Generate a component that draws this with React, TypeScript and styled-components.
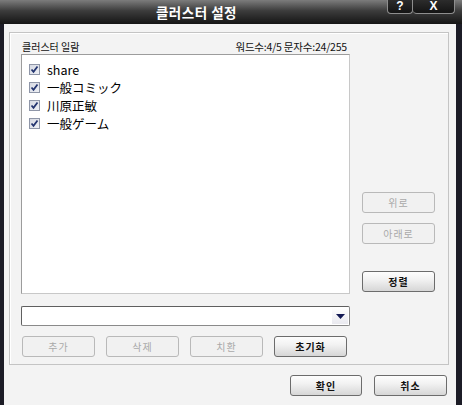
import * as React from 'react';
import styled, { createGlobalStyle } from 'styled-components';

const GlobalStyle = createGlobalStyle`
  html, body {
    margin: 0;
    padding: 0;
    background: #1c1c26;
  }
  body {
    font-family: "Noto Sans CJK KR", "Liberation Sans", sans-serif;
  }
`;

const Window = styled.div`
  width: 462px;
  height: 405px;
  display: flex;
  flex-direction: column;
  background: #1c1c26;
  overflow: hidden;
`;

const TitleBar = styled.div`
  height: 24px;
  display: flex;
  align-items: flex-start;
  background: linear-gradient(#7c7c7c 0%, #3c3c3c 45%, #151515 100%);
`;

const Title = styled.div`
  flex: 1;
  height: 24px;
  line-height: 24px;
  text-align: center;
  padding-left: 6px;
  color: #ffffff;
  font-size: 13.5px;
  font-weight: 700;
  letter-spacing: 0.5px;
`;

const TitleButtons = styled.div`
  display: flex;
  margin-right: 7px;
`;

const TitleButton = styled.div<{ $w: number }>`
  width: ${(p) => p.$w}px;
  height: 14px;
  box-sizing: border-box;
  border: 1px solid #8e8e8e;
  border-top: none;
  border-radius: 0 0 4px 4px;
  background: linear-gradient(#2c2c2c, #141414);
  color: #ffffff;
  font-family: "Liberation Sans", sans-serif;
  font-weight: 700;
  font-size: 12px;
  line-height: 12px;
  text-align: center;
  & + & {
    border-left: none;
  }
`;

const Body = styled.div`
  flex: 1;
  margin: 0 6px 0 4px;
  background: #f3f3f3;
  padding: 8px 7px 0 5px;
  display: flex;
  flex-direction: column;
`;

const GroupBox = styled.div`
  border: 1px solid #c4c4c4;
  box-shadow: inset 1px 1px 0 #ffffff;
  padding: 5px 0 7px 11px;
  display: grid;
  grid-template-columns: 329px 73px;
  column-gap: 12px;
  grid-template-rows: 16px 240px auto auto;
`;

const LabelRow = styled.div`
  display: flex;
  justify-content: space-between;
  align-items: center;
  font-size: 10px;
  color: #111111;
  padding: 0 3px 0 1px;
`;

const Counter = styled.span`
  font-size: 10.5px;
  letter-spacing: -0.2px;
`;

const ListBox = styled.div`
  background: #ffffff;
  border: 1px solid #9c9c9c;
  border-right-color: #c8c8c8;
  border-bottom-color: #c8c8c8;
  padding: 5px 0 0 7px;
  display: flex;
  flex-direction: column;
`;

const Item = styled.label`
  height: 18px;
  display: flex;
  align-items: center;
  gap: 7px;
  font-family: "Noto Sans CJK JP", "Liberation Sans", sans-serif;
  font-size: 12.5px;
  color: #000000;
`;

const CheckBox = styled.span`
  width: 11px;
  height: 11px;
  box-sizing: border-box;
  border: 1px solid #8f96a8;
  background: linear-gradient(135deg, #d6d9e2, #eef0f5);
  display: flex;
  align-items: center;
  justify-content: center;
`;

const SideColumn = styled.div`
  display: flex;
  flex-direction: column;
  justify-content: flex-end;
  padding-bottom: 2px;
`;

const Button = styled.div<{ $enabled?: boolean; $w?: number }>`
  width: ${(p) => p.$w ?? 73}px;
  height: 21px;
  box-sizing: border-box;
  border: 1px solid ${(p) => (p.$enabled ? '#6c6c6c' : '#b9b9b9')};
  border-radius: 3px;
  background: ${(p) =>
    p.$enabled ? 'linear-gradient(#fdfdfd, #f2f2f2 40%, #d6d6d6)' : '#f1f1f1'};
  color: ${(p) => (p.$enabled ? '#111111' : '#a9a9a9')};
  font-size: 10px;
  font-weight: ${(p) => (p.$enabled ? 700 : 400)};
  display: flex;
  align-items: center;
  justify-content: center;
  letter-spacing: 1px;
`;

const SideGap = styled.div<{ $h: number }>`
  height: ${(p) => p.$h}px;
`;

const ComboRow = styled.div`
  grid-column: 1;
  margin-top: 12px;
  height: 20px;
  box-sizing: border-box;
  border: 1px solid #8a8a8a;
  border-top-color: #5f5f5f;
  border-left-color: #5f5f5f;
  border-radius: 2px;
  background: #ffffff;
  display: flex;
  justify-content: flex-end;
  align-items: stretch;
  padding: 1px;
`;

const ComboArrow = styled.div`
  width: 16px;
  background: linear-gradient(#ffffff, #e9e9ef);
  display: flex;
  align-items: center;
  justify-content: center;
`;

const ButtonRow = styled.div`
  grid-column: 1;
  margin-top: 10px;
  display: flex;
  gap: 11px;
  padding-left: 1px;
`;

const Footer = styled.div`
  display: flex;
  justify-content: flex-end;
  gap: 12px;
  padding: 10px 2px 0 0;
`;

function Check() {
  return (
    <svg width="9" height="9" viewBox="0 0 9 9">
      <path d="M1.5 4.5 L3.5 6.8 L7.5 1.5" fill="none" stroke="#23346f" strokeWidth="1.8" />
    </svg>
  );
}

const items = ['share', '一般コミック', '川原正敏', '一般ゲーム'];

export default function App() {
  return (
    <>
      <GlobalStyle />
      <Window>
        <TitleBar>
          <Title>클러스터 설정</Title>
          <TitleButtons>
            <TitleButton $w={26}>?</TitleButton>
            <TitleButton $w={42}>X</TitleButton>
          </TitleButtons>
        </TitleBar>
        <Body>
          <GroupBox>
            <LabelRow>
              <span>클러스터 일람</span>
              <Counter>워드수:4/5 문자수:24/255</Counter>
            </LabelRow>
            <div />
            <ListBox>
              {items.map((name) => (
                <Item key={name}>
                  <CheckBox>
                    <Check />
                  </CheckBox>
                  {name}
                </Item>
              ))}
            </ListBox>
            <SideColumn>
              <Button>위로</Button>
              <SideGap $h={10} />
              <Button>아래로</Button>
              <SideGap $h={27} />
              <Button $enabled>정렬</Button>
            </SideColumn>
            <ComboRow>
              <ComboArrow>
                <svg width="9" height="5" viewBox="0 0 9 5">
                  <path d="M0 0 H9 L4.5 5 Z" fill="#141a55" />
                </svg>
              </ComboArrow>
            </ComboRow>
            <div />
            <ButtonRow>
              <Button>추가</Button>
              <Button>삭제</Button>
              <Button>치환</Button>
              <Button $enabled>초기화</Button>
            </ButtonRow>
          </GroupBox>
          <Footer>
            <Button $enabled $w={72}>확인</Button>
            <Button $enabled $w={73}>취소</Button>
          </Footer>
        </Body>
      </Window>
    </>
  );
}
